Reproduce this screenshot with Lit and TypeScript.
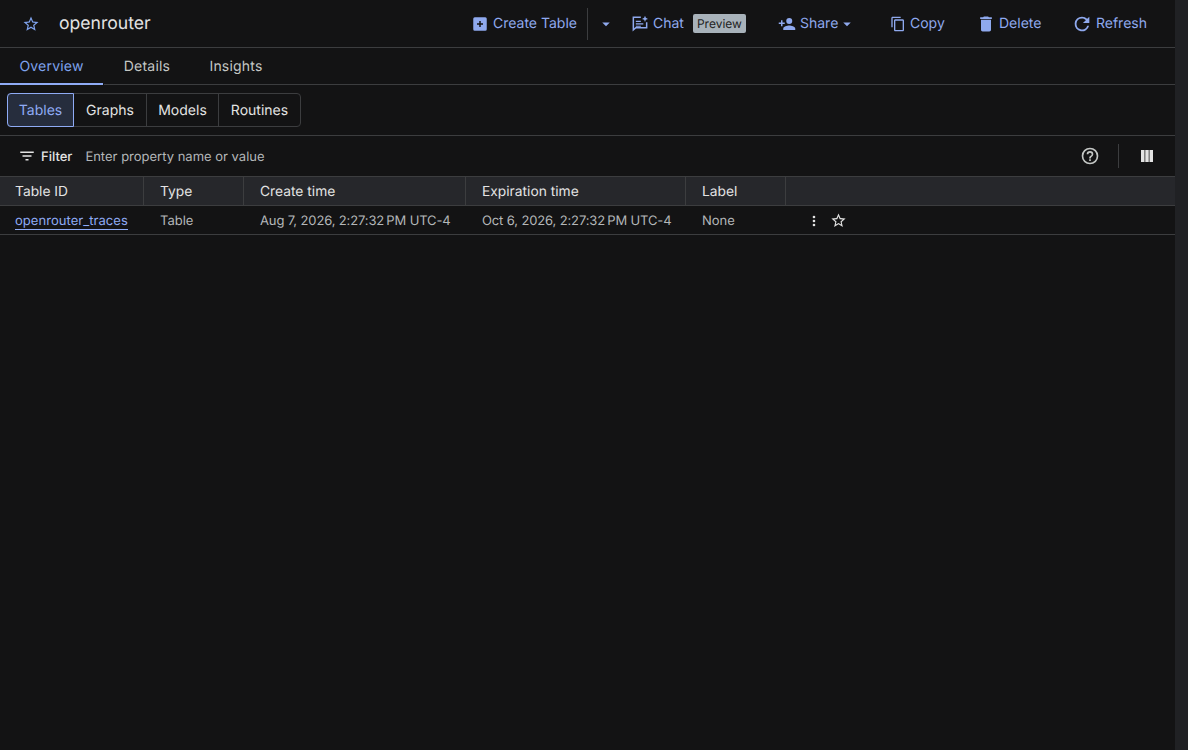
import { LitElement, html, css, svg } from "lit";
import { customElement } from "lit/decorators.js";

const star = svg`<path d="M12 15.4l-3.76 2.27 1-4.28-3.32-2.88 4.38-.37L12 6.1l1.71 4.04 4.38.37-3.32 2.88 1 4.28L12 15.4zM22 9.24l-7.19-.62L12 2 9.19 8.63 2 9.24l5.46 4.73L5.82 21 12 17.27 18.18 21l-1.63-7.03L22 9.24z"/>`;
const icon = (size: number, body: unknown, cls = "") =>
  html`<svg class="ic ${cls}" width=${size} height=${size} viewBox="0 0 24 24" fill="currentColor">${body}</svg>`;

@customElement("app-root")
export class AppRoot extends LitElement {
  static styles = css`
    :host { display: flex; height: 750px; width: 1188px; background: #131314; color: #e3e3e3; font-family: Inter, "Liberation Sans", sans-serif; font-size: 14px; overflow: hidden; text-rendering: geometricPrecision; }
    .main { width: 1175px; flex: none; display: flex; flex-direction: column; }
    .track { flex: 1; background: #202124; }
    .ic { display: block; flex: none; }
    .top { height: 47px; display: flex; align-items: center; border-bottom: 1px solid #3c3d3f; flex: none; }
    .star-top { margin-left: 22px; color: #7fa3ee; }
    .title { font-size: 17.6px; margin-left: 19px; color: #e3e3e3; flex: 1; font-weight: 400; }
    .act { display: flex; align-items: center; color: #8fa9ee; font-weight: 400; white-space: nowrap; box-sizing: border-box; }
    .a-create { width: 118px; padding-left: 2px; }
    .a-create .ic { margin-right: 4px; }
    .sep { width: 1px; height: 32px; background: #3c3d3f; }
    .a-drop { width: 34px; margin-right: 6px; justify-content: center; padding-left: 2px; }
    .a-chat { width: 149px; padding-left: 2px; }
    .a-chat .ic { margin-right: 3px; }
    .badge { background: #a8b2ba; color: #1f1f1f; font-size: 12px; border-radius: 2px; padding: 0 4px; height: 19px; line-height: 19px; margin-left: 9px; }
    .a-share { width: 112px; padding-left: 1px; }
    .a-share .ic { margin-right: 4px; }
    .a-share .ic.caret { margin: 0; }
    .a-copy { width: 86px; padding-left: 1px; }
    .a-copy .ic { margin-right: 4px; }
    .a-delete { width: 96px; padding-left: 1px; }
    .a-delete .ic { margin-right: 3px; }
    .a-refresh { margin-right: 28px; }
    .a-refresh .ic { margin-right: 3px; }
    .tabs { height: 36px; display: flex; border-bottom: 1px solid #3c3d3f; flex: none; }
    .tab { display: flex; align-items: center; justify-content: center; color: #c4c7c5; box-sizing: border-box; height: 37px; letter-spacing: .2px; }
    .tab.on { color: #7fa3ee; width: 103px; border-bottom: 2px solid #8fabf5; padding-top: 2px; box-shadow: 1px 0 0 #131314; margin-right: 1px; border-right: 0; }
    .tab.t2 { width: 86px; }
    .tab.t3 { width: 66px; margin-left: 13px; }
    .chips-wrap { height: 51px; padding-top: 8px; box-sizing: border-box; border-bottom: 1px solid #3c3d3f; flex: none; display: flex; align-items: flex-start; padding-left: 7px; }
    .chips { display: flex; height: 34px; border: 1px solid #3c3d3f; border-radius: 4px; box-sizing: border-box; }
    .chip { display: flex; align-items: center; justify-content: center; border-right: 1px solid #3c3d3f; box-sizing: border-box; color: #e3e3e3; padding-top: 1px; }
    .chip:last-child { border-right: 0; }
    .chip.on { background: #262d3d; color: #8fabf5; outline: 1px solid #8fabf5; outline-offset: -1px; border-radius: 4px 0 0 4px; border-right: 0; margin: -1px 0 -1px -1px; height: 34px; width: 67px; }
    .c2 { width: 73px; } .c3 { width: 72px; } .c4 { width: 81px; }
    .filter { height: 40px; display: flex; align-items: center; flex: none; }
    .filter .f-ic { margin-left: 18px; color: #e3e3e3; }
    .f-label { margin-left: 5px; font-weight: 500; font-size: 13px; color: #e3e3e3; padding-top: 2px; }
    .f-ph { margin-left: 13px; color: #b4b7b9; flex: 1; font-size: 13px; padding-top: 2px; }
    .help { color: #c4c7c5; margin-right: 18px; }
    .fsep { width: 1px; height: 24px; background: #3c3d3f; margin-right: 19px; }
    .cols { color: #e3e3e3; margin-right: 19px; }
    .row { display: grid; grid-template-columns: 144px 100px 222px 220px 100px 1fr; box-sizing: border-box; flex: none; }
    .head { height: 30px; background: #26272b; border-top: 1px solid #3c3d3f; border-bottom: 1px solid #3c3d3f; font-weight: 400; color: #e3e3e3; font-size: 13.8px; }
    .head > div { display: flex; align-items: center; padding-left: 16px; padding-top: 2px; box-sizing: border-box; border-right: 1px solid #3c3d3f; }
    .head > div:first-child { padding-left: 15px; }
    .head > div:last-child { border-right: 0; }
    .body { height: 29px; border-bottom: 1px solid #3c3d3f; color: #b4b7b9; font-size: 13px; }
    .body > div { display: flex; align-items: center; padding-left: 16px; padding-top: 2px; white-space: nowrap; }
    .body > div:first-child { padding-left: 15px; }
    .date { letter-spacing: -.13px; }
    .link { color: #8fabf5; border-bottom: 1px solid #8fabf5; line-height: 16px; letter-spacing: .05px; }
    .body > .acts { color: #e3e3e3; gap: 8px; padding-left: 20px; padding-top: 1px; }
  `;

  render() {
    return html`
      <div class="main">
        <div class="top">
          ${icon(18, star, "star-top")}
          <div class="title">openrouter</div>
          <div class="act a-create">${icon(18, svg`<path d="M5 3h14a2 2 0 0 1 2 2v14a2 2 0 0 1-2 2H5a2 2 0 0 1-2-2V5a2 2 0 0 1 2-2zm8 5h-2v3H8v2h3v3h2v-3h3v-2h-3V8z" fill-rule="evenodd"/>`)}Create Table</div>
          <div class="sep"></div>
          <div class="act a-drop">${icon(18, svg`<path d="M7 10l5 5 5-5z"/>`)}</div>
          <div class="act a-chat">
            ${icon(20, svg`<path fill="none" stroke="currentColor" stroke-width="1.8" d="M13 4H4v15l3-2.500h13V10"/><path d="M7 8h6v1.600H7zM7 11h9v1.600H7zM7 14h6v1.400H7z"/><path d="M18 2l1 2.600L21.600 6 19 7l-1 2.600L17 7l-2.600-1L17 4.600z"/>`)}
            Chat<span class="badge">Preview</span>
          </div>
          <div class="act a-share">
            ${icon(18, svg`<path d="M15 12a4 4 0 1 0 0-8 4 4 0 0 0 0 8zm-9-2V7H4v3H1v2h3v3h2v-3h3v-2H6zm9 4c-2.700 0-8 1.300-8 4v2h16v-2c0-2.700-5.300-4-8-4z"/>`)}
            Share${icon(18, svg`<path d="M7 10l5 5 5-5z"/>`, "caret")}
          </div>
          <div class="act a-copy">${icon(16, svg`<path d="M16 1H4c-1.100 0-2 .9-2 2v14h2V3h12V1zm3 4H8c-1.100 0-2 .9-2 2v14c0 1.100.9 2 2 2h11c1.100 0 2-.9 2-2V7c0-1.100-.9-2-2-2zm0 16H8V7h11v14z"/>`)}Copy</div>
          <div class="act a-delete">${icon(20, svg`<path d="M6 19c0 1.100.9 2 2 2h8c1.100 0 2-.9 2-2V7H6v12zM19 4h-3.500l-1-1h-5l-1 1H5v2h14V4z"/>`)}Delete</div>
          <div class="act a-refresh">${icon(22, svg`<path d="M17.650 6.350A7.960 7.960 0 0 0 12 4a8 8 0 1 0 7.730 10h-2.080A6 6 0 1 1 12 6c1.660 0 3.140.690 4.220 1.780L13 11h7V4l-2.350 2.350z"/>`)}Refresh</div>
        </div>
        <div class="tabs">
          <div class="tab on">Overview</div>
          <div class="tab t2">Details</div>
          <div class="tab t3">Insights</div>
        </div>
        <div class="chips-wrap">
          <div class="chips">
            <div class="chip on">Tables</div>
            <div class="chip c2">Graphs</div>
            <div class="chip c3">Models</div>
            <div class="chip c4">Routines</div>
          </div>
        </div>
        <div class="filter">
          ${icon(18, svg`<path d="M3 6h18v2H3zM6 11h12v2H6zM10 16h4v2h-4z"/>`, "f-ic")}
          <span class="f-label">Filter</span>
          <span class="f-ph">Enter property name or value</span>
          ${icon(20, svg`<path d="M11 18h2v-2h-2v2zm1-16a10 10 0 1 0 0 20 10 10 0 0 0 0-20zm0 18a8 8 0 1 1 0-16 8 8 0 0 1 0 16zm0-14a4 4 0 0 0-4 4h2a2 2 0 1 1 4 0c0 2-3 1.750-3 5h2c0-2.250 3-2.500 3-5a4 4 0 0 0-4-4z"/>`, "help")}
          <div class="fsep"></div>
          ${icon(18, svg`<path d="M4 4h4.700v16H4zM9.700 4h4.600v16H9.700zM15.300 4H20v16h-4.700z"/>`, "cols")}
        </div>
        <div class="row head">
          <div>Table ID</div><div>Type</div><div>Create time</div><div>Expiration time</div><div>Label</div><div></div>
        </div>
        <div class="row body">
          <div><span class="link">openrouter_traces</span></div>
          <div>Table</div>
          <div class="date">Aug 7, 2026, 2:27:32\u202fPM UTC-4</div>
          <div class="date">Oct 6, 2026, 2:27:32\u202fPM UTC-4</div>
          <div>None</div>
          <div class="acts">
            ${icon(16, svg`<path d="M12 8a2 2 0 1 0 0-4 2 2 0 0 0 0 4zm0 2a2 2 0 1 0 0 4 2 2 0 0 0 0-4zm0 6a2 2 0 1 0 0 4 2 2 0 0 0 0-4z"/>`)}
            ${icon(17, star)}
          </div>
        </div>
      </div>
      <div class="track"></div>
    `;
  }
}
